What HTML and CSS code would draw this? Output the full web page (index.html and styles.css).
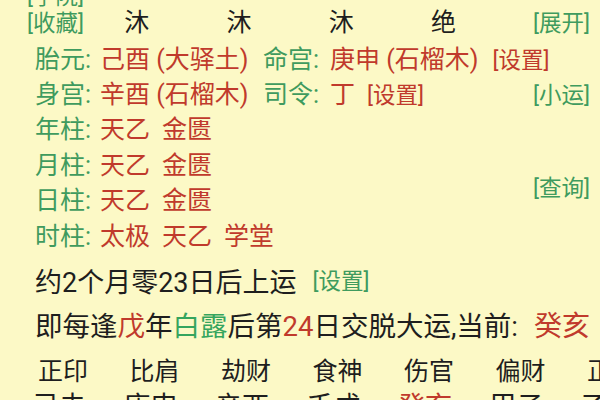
FILE: index.html
```html
<!DOCTYPE html>
<html lang="zh-CN">
<head>
<meta charset="utf-8">
<title>排盘</title>
<link rel="stylesheet" href="styles.css">
</head>
<body>
<div class="page">
  <div class="row cut"><span class="link g">[学院]</span></div>
  <div class="row head">
    <span class="link g lead">[收藏]</span>
    <span class="cell">沐</span>
    <span class="cell">沐</span>
    <span class="cell">沐</span>
    <span class="cell">绝</span>
    <span class="link g end">[展开]</span>
  </div>
  <div class="row info">
    <span class="lbl">胎元:</span>
    <span class="val v1 r">己酉 (大驿土)</span>
    <span class="lbl l2">命宫:</span>
    <span class="val r">庚申 (石榴木)</span>
    <span class="link r set">[设置]</span>
  </div>
  <div class="row info">
    <span class="lbl">身宫:</span>
    <span class="val v1 r">辛酉 (石榴木)</span>
    <span class="lbl l2">司令:</span>
    <span class="val r">丁</span>
    <span class="link r set2">[设置]</span>
    <span class="link g end">[小运]</span>
  </div>
  <div class="row info">
    <span class="lbl">年柱:</span>
    <span class="star r">天乙</span><span class="star r">金匮</span>
  </div>
  <div class="row info">
    <span class="lbl">月柱:</span>
    <span class="star r">天乙</span><span class="star r">金匮</span>
  </div>
  <div class="row info">
    <span class="lbl">日柱:</span>
    <span class="star r">天乙</span><span class="star r">金匮</span>
    <span class="link g end raised">[查询]</span>
  </div>
  <div class="row info">
    <span class="lbl">时柱:</span>
    <span class="star r">太极</span><span class="star r">天乙</span><span class="star r">学堂</span>
  </div>
  <div class="row start">
    <span class="txt">约2个月零23日后上运</span>
    <span class="link g set3">[设置]</span>
  </div>
  <div class="row luck">
    <span class="txt">即每逢<span class="r">戊</span>年<span class="g2">白露</span>后第<span class="r">24</span>日交脱大运,当前:</span>
    <span class="cur r">癸亥</span>
  </div>
  <div class="row gods">
    <span class="god">正印</span>
    <span class="god">比肩</span>
    <span class="god">劫财</span>
    <span class="god">食神</span>
    <span class="god">伤官</span>
    <span class="god">偏财</span>
    <span class="god">正财</span>
  </div>
  <div class="row pillars">
    <span class="gz">己未</span>
    <span class="gz">庚申</span>
    <span class="gz">辛酉</span>
    <span class="gz">壬戌</span>
    <span class="gz r">癸亥</span>
    <span class="gz">甲子</span>
    <span class="gz">乙丑</span>
  </div>
</div>
</body>
</html>
```

FILE: styles.css
```css
* { box-sizing: border-box; }
html, body { margin: 0; padding: 0; }
body {
  width: 600px;
  height: 400px;
  overflow: hidden;
  background: #fcf9c6;
  color: #1e1e1e;
  font-family: "Roboto", "Noto Sans CJK SC", sans-serif;
}
.page { padding-right: 10px; }
.row {
  display: flex;
  align-items: center;
  white-space: nowrap;
}
.g { color: #3f9b5e; }
.g2 { color: #35a55e; }
.r { color: #c03a2c; }
.link { font-size: 22.5px; line-height: 26px; }
.end { margin-left: auto; }

.cut { height: 9px; align-items: flex-end; padding-left: 27px; }

.head { height: 33px; padding-bottom: 6px; padding-left: 27px; font-size: 25px; }
.head .lead { width: 100px; }
.cell { width: 105px; line-height: 26px; }

.info { height: 35.4px; padding-left: 35px; font-size: 25px; }
.info > span { line-height: 28px; }
.lbl { width: 65px; color: #3f9b5e; }
.v1 { width: 163px; }
.l2 { width: 67px; }
.set { margin-left: 14px; }
.set2 { margin-left: 12px; }
.star { margin-right: 12px; }
.raised { align-self: flex-start; margin-top: -10px; }

.start { height: 44px; margin-top: 4.6px; padding-left: 35px; font-size: 27px; }
.set3 { margin-left: 16px; }
.luck { height: 43px; padding-left: 35px; font-size: 27.5px; }
.cur { margin-left: auto; font-size: 28px; }

.gods { height: 46px; padding-left: 38px; font-size: 25px; }
.god { flex: 0 0 91.5px; }
.pillars { height: 20px; margin-top: 5px; padding-left: 32px; font-size: 27px; line-height: 20px; align-items: flex-start; }
.gz { flex: 0 0 91.5px; line-height: 20px; }
```
